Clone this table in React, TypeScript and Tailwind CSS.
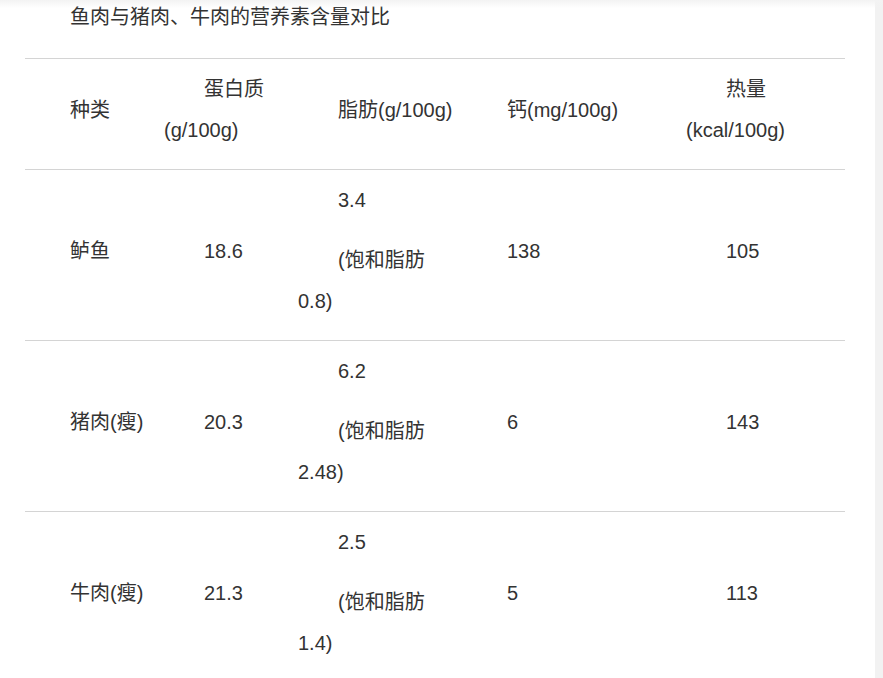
import React from "react";

type Cell = string[][]; // paragraphs -> lines

const font = {
  fontFamily: '"Liberation Sans", Arial, "Noto Sans CJK SC", sans-serif',
};

const widths = ["w-[134px]", "w-[134px]", "w-[169px]", "w-[219px]", "w-[164px]"];

const header: Cell[] = [
  [["种类"]],
  [["蛋白质", "(g/100g)"]],
  [["脂肪(g/100g)"]],
  [["钙(mg/100g)"]],
  [["热量", "(kcal/100g)"]],
];

const rows: Cell[][] = [
  [[["鲈鱼"]], [["18.6"]], [["3.4"], ["(饱和脂肪", "0.8)"]], [["138"]], [["105"]]],
  [[["猪肉(瘦)"]], [["20.3"]], [["6.2"], ["(饱和脂肪", "2.48)"]], [["6"]], [["143"]]],
  [[["牛肉(瘦)"]], [["21.3"]], [["2.5"], ["(饱和脂肪", "1.4)"]], [["5"]], [["113"]]],
];

function CellView({ cell, w }: { cell: Cell; w: string }) {
  return (
    <td className={`${w} px-[5px] pt-[10px] pb-[18px] align-middle`}>
      {cell.map((p, i) => (
        <p
          key={i}
          className={`indent-[40px] leading-[41px] ${i > 0 ? "mt-[19px]" : ""}`}
        >
          {p.map((line, j) => (
            <React.Fragment key={j}>
              {j > 0 && <br />}
              {line}
            </React.Fragment>
          ))}
        </p>
      ))}
    </td>
  );
}

export default function App() {
  return (
    <div className="relative flex h-[678px] w-[883px] overflow-hidden bg-white" style={font}>
      <div className="w-[875px] text-[20px] text-[#333]">
        <p className="indent-[40px] pl-[30px] leading-[35px] h-[58px] text-[#333]">
          鱼肉与猪肉、牛肉的营养素含量对比
        </p>
        <table className="ml-[25px] w-[820px] table-fixed border-collapse">
          <tbody>
            <tr className="border-t border-[#d4d4d4]">
              {header.map((c, i) => (
                <CellView key={i} cell={c} w={widths[i]} />
              ))}
            </tr>
            {rows.map((r, ri) => (
              <tr key={ri} className="border-t border-[#d4d4d4]">
                {r.map((c, i) => (
                  <CellView key={i} cell={c} w={widths[i]} />
                ))}
              </tr>
            ))}
            <tr className="border-t border-[#d4d4d4]">
              <td colSpan={5} className="h-[20px]"></td>
            </tr>
          </tbody>
        </table>
      </div>
      <div className="w-[8px] bg-[#f2f2f2]"></div>
      <div className="pointer-events-none absolute left-0 top-0 h-[8px] w-full bg-gradient-to-b from-[#f3f3f3] to-transparent"></div>
    </div>
  );
}
